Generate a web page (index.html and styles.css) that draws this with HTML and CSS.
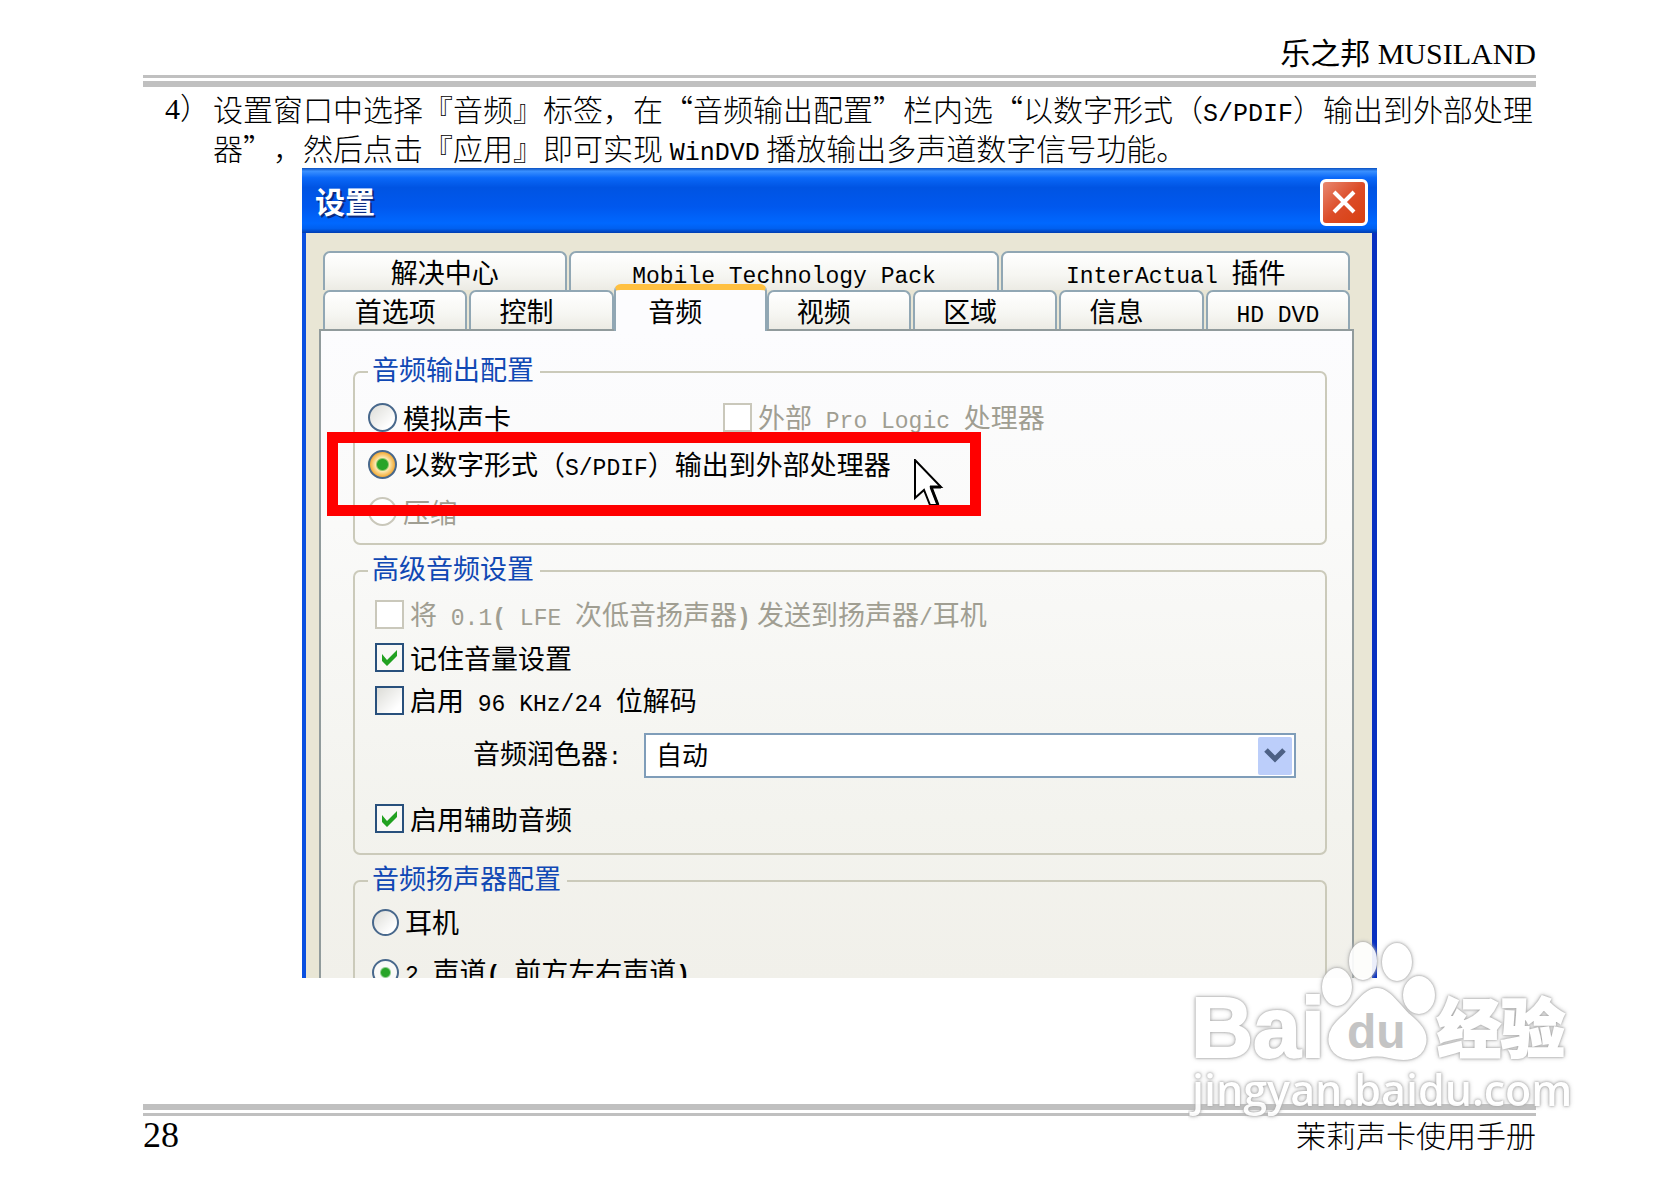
FILE: index.html
```html
<!DOCTYPE html>
<html lang="zh-CN">
<head>
  <meta charset="UTF-8">
  <meta name="viewport" content="width=device-width, initial-scale=1">
  <title>茉莉声卡使用手册</title>
  <link rel="stylesheet" href="styles.css">
</head>
<body>
  <div class="page">
    <header class="page-header">乐之邦 MUSILAND</header>

    <div class="step">
      <span class="step-number">4）</span>
      <p class="step-text">设置窗口中选择『音频』标签，在“音频输出配置”栏内选“以数字形式（<span class="latin">S/PDIF</span>）输出到外部处理<br>器”，然后点击『应用』即可实现 <span class="latin">WinDVD</span> 播放输出多声道数字信号功能。</p>
    </div>

    <!-- Janela de configurações -->
    <div class="window">
      <div class="title-bar">
        <span class="title">设置</span>
        <button class="close" type="button" aria-label="关闭">
          <svg viewBox="0 0 24 24" width="24" height="24"><path d="M2 2L22 22M22 2L2 22" stroke="#fff" stroke-width="4" fill="none"/></svg>
        </button>
      </div>

      <div class="window-body">
        <div class="tabs tabs-back">
          <button type="button" class="tab solution">解决中心</button>
          <button type="button" class="tab mobile"><span class="en">Mobile Technology Pack</span></button>
          <button type="button" class="tab inter"><span class="en">InterActual </span>插件</button>
        </div>
        <div class="tabs tabs-front">
          <button type="button" class="tab">首选项</button>
          <button type="button" class="tab short">控制</button>
          <button type="button" class="tab short active">音频</button>
          <button type="button" class="tab short">视频</button>
          <button type="button" class="tab short">区域</button>
          <button type="button" class="tab short">信息</button>
          <button type="button" class="tab"><span class="en">HD DVD</span></button>
        </div>

        <div class="panel">
          <fieldset class="output">
            <legend>音频输出配置</legend>
            <div class="row">
              <label class="analog"><input type="radio" name="output">模拟声卡</label>
              <label class="disabled"><input type="checkbox" disabled><span>外部<span class="en"> Pro Logic </span>处理器</span></label>
            </div>
            <div class="row highlighted">
              <label><input type="radio" name="output" class="hot" checked><span>以数字形式（<span class="en">S/PDIF</span>）输出到外部处理器</span></label>
              <div class="highlight">
                <svg class="cursor" viewBox="0 0 30 48" width="30" height="48">
                  <path d="M1 1V39L10 31L16 46H24L17 28H27Z" fill="#fff" stroke="#000" stroke-width="2"/>
                  <path d="M16 28H27M17 28L24 46" fill="none" stroke="#000" stroke-width="3"/>
                </svg>
              </div>
            </div>
            <div class="row">
              <label class="disabled"><input type="radio" name="output" disabled>压缩</label>
            </div>
          </fieldset>

          <fieldset class="advanced">
            <legend>高级音频设置</legend>
            <div class="row">
              <label class="disabled"><input type="checkbox" disabled><span>将<span class="en"> 0.1<b>(</b> LFE </span>次低音扬声器<span class="en"><b>)</b></span> 发送到扬声器<span class="en">/</span>耳机</span></label>
            </div>
            <div class="row">
              <label><input type="checkbox" checked>记住音量设置</label>
            </div>
            <div class="row">
              <label><input type="checkbox"><span>启用<span class="en"> 96 KHz/24 </span>位解码</span></label>
            </div>
            <div class="select-row">
              <label for="effect">音频润色器<span class="en">:</span></label>
              <div class="select-box">
                <select id="effect">
                  <option>自动</option>
                </select>
                <svg class="arrow" viewBox="0 0 34 38" width="34" height="38"><rect width="34" height="38" rx="2" fill="#bccefa"/><path d="M8 13L17 22L26 13" fill="none" stroke="#4d6185" stroke-width="5"/></svg>
              </div>
            </div>
            <div class="row">
              <label><input type="checkbox" checked>启用辅助音频</label>
            </div>
          </fieldset>

          <fieldset class="speakers">
            <legend>音频扬声器配置</legend>
            <div class="row">
              <label><input type="radio" name="speaker">耳机</label>
            </div>
            <div class="row cut">
              <label><input type="radio" name="speaker" checked><span><span class="en">2 </span>声道<span class="en"><b>(</b> </span>前方左右声道<span class="en"><b>)</b></span></span></label>
            </div>
          </fieldset>
        </div>
      </div>
    </div>

    <footer class="page-footer">
      <span class="page-number">28</span>
      <span class="manual-name">茉莉声卡使用手册</span>
      <svg class="watermark" viewBox="0 0 400 190" width="400" height="190">
        <g class="mark">
          <text class="bai" x="3" y="122">Bai</text>
          <text class="jingyan" x="249" y="117">经验</text>
          <ellipse cx="149" cy="52" rx="14" ry="18"/>
          <ellipse cx="175" cy="26" rx="13" ry="18"/>
          <ellipse cx="209" cy="27" rx="14" ry="18"/>
          <ellipse cx="231" cy="60" rx="15" ry="18"/>
          <path d="M189 54C201 54 209 68 220 79C231 88 240 97 237 109C233 125 217 126 201 122C193 120 185 120 177 122C161 126 146 123 142 109C139 97 147 88 158 79C169 68 177 54 189 54Z"/>
          <text class="url" x="4" y="171">jingyan.baidu.com</text>
        </g>
        <text class="du" x="159" y="113">du</text>
      </svg>
    </footer>
  </div>
</body>
</html>
```
FILE: styles.css
```css
* {
  box-sizing: border-box;
}

body {
  margin: 0;
  background-color: #fff;
  color: #000;
  font-family: "Noto Sans CJK SC", sans-serif;
  text-spacing-trim: space-all;
}

.page {
  padding: 29px 140px 0 143px;
}

.page-header {
  height: 49px;
  line-height: 49px;
  border-bottom: 3px solid #c0c0c0;
  text-align: right;
  font-family: "Liberation Serif", "Noto Sans CJK SC", serif;
  font-size: 30px;
}

.step {
  display: flex;
  margin-top: 3px;
  padding: 2px 0 0 22px;
  border-top: 6px solid #c0c0c0;
  height: 87px;
  font-size: 30px;
  font-weight: 300;
  line-height: 39px;
  white-space: nowrap;
}

.step-number {
  width: 48px;
  font-family: "Liberation Serif", "Noto Sans CJK SC", serif;
}

.step-text {
  margin: 0;
}

.latin {
  font-family: "Liberation Mono", monospace;
  font-size: 25px;
  line-height: 25px;
}

/* Janela estilo XP */
.window {
  margin: 0 159px;
  border-left: 4px solid #0a50e0;
  border-right: 5px solid #0830c0;
}

.title-bar {
  display: flex;
  justify-content: space-between;
  align-items: center;
  height: 65px;
  margin: 0 -5px 0 -4px;
  padding: 3px 9px 0 13px;
  background: linear-gradient(#0a50c0 0, #3a90ff 5%, #0a68f8 15%, #0054e3 30%, #0058ee 60%, #0068ff 85%, #0060f0 93%, #003cb0 100%);
  color: #fff;
  font-size: 30px;
  font-weight: 700;
  text-shadow: 2px 2px 0 #0a2a80;
}

.title {
  padding-bottom: 5px;
}

.close {
  display: flex;
  align-items: center;
  justify-content: center;
  width: 48px;
  height: 47px;
  padding: 0;
  border: 3px solid #fff;
  border-radius: 6px;
  background: linear-gradient(135deg, #e88870, #dc4c28 50%, #d84010);
}

.window-body {
  padding: 18px 18px 0 13px;
  background-color: #e9e6d5;
}

.en {
  font-family: "Liberation Mono", monospace;
  font-size: 23px;
  line-height: 23px;
  white-space: pre;
}

.tabs {
  display: flex;
  gap: 2px;
  margin: 0 4px;
}

.tab {
  flex: 146 1 0;
  height: 39px;
  padding: 0;
  border: 2px solid #91a7b4;
  border-bottom: 0;
  border-radius: 7px 7px 0 0;
  background: linear-gradient(#fff, #f6f6f2 60%, #ecebe4);
  color: #000;
  font-family: inherit;
  font-size: 27px;
  line-height: 34px;
  white-space: nowrap;
}

.tabs-back .tab {
  line-height: 38px;
}

.solution {
  flex-grow: 242;
}

.mobile {
  flex-grow: 431;
}

.inter {
  flex-grow: 348;
}

.short {
  text-indent: -30px;
}

.active {
  position: relative;
  flex-grow: 155;
  height: 47px;
  margin: -6px -2px -2px;
  border-top: 6px solid #ffc040;
  background: #fcfcfe;
}

.panel {
  border: 2px solid #919b9c;
  border-bottom: 0;
  padding: 25px 25px 0 32px;
  background: linear-gradient(#fcfcfe, #fafaf9 30%, #f3f3ee 75%, #f1f0ea);
}

fieldset {
  min-width: 0;
  margin: 0 0 10px;
  padding: 6px 13px 8px;
  border: 2px solid #cbcaba;
  border-radius: 7px;
}

legend {
  padding: 0 6px 6px 4px;
  color: #1048b4;
  font-size: 27px;
  line-height: 26px;
}

.row {
  display: flex;
  align-items: center;
  height: 47px;
  font-size: 27px;
}

.row label {
  display: flex;
  align-items: center;
  gap: 6px;
  line-height: 30px;
  white-space: nowrap;
}

.row .analog {
  width: 355px;
}

input {
  appearance: none;
  flex: none;
  width: 29px;
  height: 29px;
  margin: 0;
  border: 2px solid #28507c;
  background: linear-gradient(135deg, #dcdcd7, #fff 80%);
}

input[type="radio"] {
  border-color: #48688c;
  border-radius: 50%;
}

input[type="radio"]:checked {
  background: radial-gradient(circle, #28a428 0 4px, #fafaf8 6px);
}

input[type="radio"].hot:checked {
  background: radial-gradient(circle, #28a428 0 5px, #fce8b0 7px, #f4b040 12px);
}

input[type="checkbox"]:checked {
  background: url('data:image/svg+xml,<svg xmlns="http://www.w3.org/2000/svg" viewBox="0 0 25 25"><path d="M5 9L10 15L20 5V11L10 21L5 16Z" fill="%2321a121"/></svg>') #f8f8f6;
}

input:disabled {
  border-color: #cac8bb;
  background: #fff;
}

.disabled {
  color: #a09e92;
}

.highlighted {
  position: relative;
}

/* Destaque vermelho sobre a opção */
.highlight {
  position: absolute;
  left: -41px;
  top: -9px;
  width: 654px;
  height: 84px;
  border: 11px solid #f00;
  overflow: hidden;
}

.cursor {
  position: absolute;
  left: 576px;
  top: 16px;
}

.advanced {
  padding: 6px 29px 13px 20px;
}

.advanced legend {
  margin-left: -7px;
}

.advanced .row {
  height: 43px;
}

.select-row {
  display: flex;
  align-items: center;
  margin: 11px 0 19px 98px;
  font-size: 27px;
}

.select-row label {
  width: 171px;
  padding-bottom: 4px;
  line-height: 30px;
}

.select-box {
  position: relative;
  flex: 1;
}

select {
  display: block;
  appearance: none;
  width: 100%;
  height: 45px;
  padding: 0 10px 4px;
  border: 2px solid #7f9db9;
  border-radius: 0;
  background: #fff;
  color: #000;
  font-family: inherit;
  font-size: 26px;
}

.arrow {
  position: absolute;
  right: 4px;
  top: 4px;
  pointer-events: none;
}

.speakers {
  margin: 0;
  padding: 0 17px;
  border-bottom: 0;
  border-radius: 7px 7px 0 0;
}

.speakers legend {
  margin-left: -4px;
}

.speakers .row {
  height: 50px;
}

.speakers .cut {
  align-items: flex-start;
  height: 31px;
  overflow: hidden;
}

.cut label {
  height: 50px;
}

.speakers input {
  width: 27px;
  height: 27px;
}

.page-footer {
  position: relative;
  display: flex;
  justify-content: space-between;
  margin-top: 126px;
  border-top: 6px solid #c0c0c0;
  font-size: 30px;
  font-weight: 300;
  line-height: 44px;
}

.page-footer::before {
  content: "";
  position: absolute;
  top: 3px;
  left: 0;
  right: 0;
  height: 3px;
  background: #c0c0c0;
}

.page-number {
  padding-top: 3px;
  font-family: "Liberation Serif", serif;
  font-size: 36px;
}

.manual-name {
  padding-top: 2px;
}

/* Marca d'água */
.watermark {
  position: absolute;
  right: -52px;
  top: -175px;
  font-family: "Liberation Sans", "Noto Sans CJK SC", sans-serif;
  font-weight: 700;
}

.mark {
  fill: #fff;
  stroke: #fff;
  stroke-width: 2px;
  opacity: 0.92;
  filter: drop-shadow(0 0 1px #999) drop-shadow(0 0 2px #bbb);
}

.bai {
  font-size: 86px;
}

.jingyan {
  font-size: 64px;
  font-weight: 900;
}

.url {
  font-family: "Open Sans", sans-serif;
  font-size: 43px;
  font-weight: 600;
  stroke: none;
}

.du {
  fill: #c4c4c4;
  font-size: 48px;
}
```
